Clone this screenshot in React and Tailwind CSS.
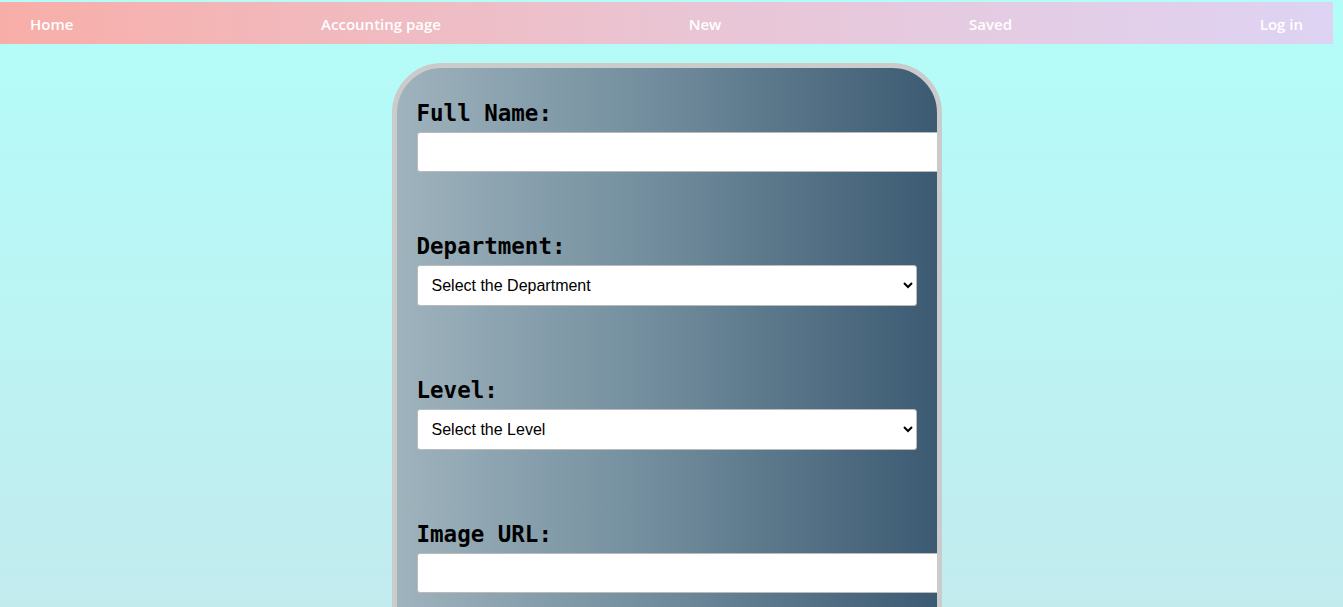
import React from "react";

const navLinks = ["Home", "Accounting page", "New", "Saved", "Log in"];

const Field = ({ label, className = "", children }) => (
  <div className={className}>
    <label className="block font-['DejaVu_Sans_Mono',monospace] font-bold text-[22.5px] leading-[26px] text-black mb-[6px]">
      {label}
    </label>
    {children}
  </div>
);

const App = () => {
  return (
    <div className="min-h-screen w-full bg-gradient-to-b from-[#b3fdf9] to-[#c4e9ed]">
      <div className="w-[1333px] pt-[2px]">
        <nav className="h-[42px] flex items-center justify-between px-[30px] bg-gradient-to-r from-[#f8aea8] via-[#eac4d3] to-[#ded3f3]">
          {navLinks.map((link) => (
            <a
              key={link}
              href="#"
              className="text-white text-[15px] leading-[20px] pt-[2px] font-['Comic_Sans_MS','Open_Sans',sans-serif] font-semibold"
            >
              {link}
            </a>
          ))}
        </nav>

        <div className="w-[550px] mx-auto mt-[19px] border-[5px] border-[#cbcbcb] rounded-[50px] overflow-hidden bg-gradient-to-r from-[#9fb3bd] via-[#6f8b9b] to-[#3c5a72]">
          <form className="px-[20px] pt-[32px] pb-[90px]">
            <Field label="Full Name:">
              <input
                type="text"
                className="w-full h-[38px] px-[12px] box-content bg-white border border-[#bbb] rounded-[3px]"
              />
            </Field>

            <Field label="Department:" className="mt-[61px]">
              <select className="w-full h-[41px] pl-[10px] pr-[8px] bg-white border border-[#bbb] rounded-[3px] text-[16px] text-black font-['Liberation_Sans',Arial,sans-serif]">
                <option>Select the Department</option>
                <option>Accounting</option>
                <option>Marketing</option>
              </select>
            </Field>

            <Field label="Level:" className="mt-[71px]">
              <select className="w-full h-[41px] pl-[10px] pr-[8px] bg-white border border-[#bbb] rounded-[3px] text-[16px] text-black font-['Liberation_Sans',Arial,sans-serif]">
                <option>Select the Level</option>
                <option>100</option>
                <option>200</option>
              </select>
            </Field>

            <Field label="Image URL:" className="mt-[71px]">
              <input
                type="text"
                className="w-full h-[38px] px-[12px] box-content bg-white border border-[#bbb] rounded-[3px]"
              />
            </Field>
          </form>
        </div>
      </div>
    </div>
  );
};

export default App;
